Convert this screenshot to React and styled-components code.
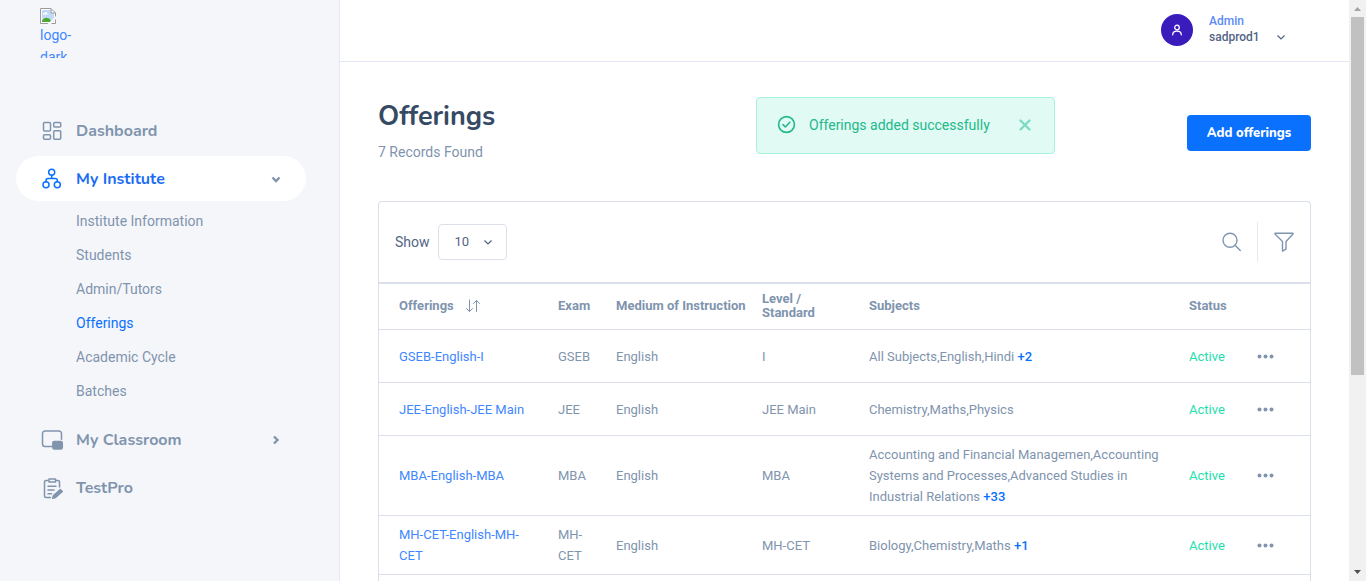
import React from "react";
import styled, { createGlobalStyle, css } from "styled-components";

const color = {
  primary: "#0971fe",
  link: "#3f87ff",
  heading: "#364a63",
  base: "#526484",
  muted: "#8094ae",
  border: "#dbdfea",
  line: "#e5e9f2",
  panel: "#f5f6fa",
  success: "#1ee0ac",
  successDark: "#20b98b",
};

const bodyFont = `Roboto, "Liberation Sans", sans-serif`;
const displayFont = `Nunito, Lato, "Open Sans", sans-serif`;

const GlobalStyle = createGlobalStyle`
  *, *::before, *::after { box-sizing: border-box; }
  body {
    margin: 0;
    background: #fff;
    color: ${color.base};
    font: 400 14px/22px ${bodyFont};
  }
  a { text-decoration: none; }
  button { font: inherit; cursor: pointer; }
`;

const Page = styled.div`
  display: flex;
  height: 100vh;
  overflow: hidden;
`;

/* Sidebar */
const Sidebar = styled.aside`
  flex: 0 0 340px;
  background: ${color.panel};
  border-right: 1px solid ${color.line};
`;

const Brand = styled.a`
  display: block;
  width: 34px;
  height: 50px;
  margin: 8px 0 50px 40px;
  overflow: hidden;
  color: ${color.link};
  svg { display: block; }
`;

const Menu = styled.ul`
  display: flex;
  flex-direction: column;
  gap: 3px;
  margin: 0;
  padding: 0 33px 0 16px;
  list-style: none;
`;

const MenuLink = styled.a`
  display: flex;
  align-items: center;
  gap: 12px;
  height: 45px;
  padding: 0 24px;
  border-radius: 23px;
  color: ${(p) => (p.$active ? "#1a6cf5" : color.muted)};
  background: ${(p) => (p.$active ? "#fff" : "transparent")};
  font: 700 16px/24px ${displayFont};
`;

const MenuIcon = styled.svg`
  flex: none;
  width: 24px;
  height: 24px;
  fill: none;
  stroke: currentColor;
  stroke-width: 1.5;
  stroke-linecap: round;
  stroke-linejoin: round;
  color: ${(p) => (p.$active ? color.primary : color.muted)};
`;

const MenuText = styled.span`
  flex: 1;
`;

const Caret = styled.svg`
  flex: none;
  width: 12px;
  height: 12px;
  fill: none;
  stroke: ${(p) => p.$tone || color.muted};
  stroke-width: ${(p) => p.$weight || 2.4};
`;

const SubMenu = styled.ul`
  margin: 3px 0 6px;
  padding: 0 0 0 60px;
  list-style: none;
`;

const SubLink = styled.a`
  display: block;
  font-size: 14px;
  line-height: 34px;
  color: ${(p) => (p.$active ? color.primary : color.muted)};
`;

/* Main column */
const Main = styled.main`
  display: flex;
  flex: 1;
  flex-direction: column;
  min-width: 0;
`;

const Header = styled.header`
  display: flex;
  flex: none;
  justify-content: flex-end;
  height: 62px;
  padding: 13px 62px 0 0;
  border-bottom: 1px solid #e5e5f5;
`;

const UserButton = styled.button`
  display: flex;
  align-items: center;
  gap: 16px;
  height: 34px;
  padding: 0;
  border: 0;
  background: none;
  color: ${color.base};
  text-align: left;
`;

const Avatar = styled.span`
  display: flex;
  align-items: center;
  justify-content: center;
  width: 32px;
  height: 32px;
  border-radius: 50%;
  background: #3a1cbc;
`;

const UserInfo = styled.span`
  display: grid;
  grid-template-columns: 52px auto;
  column-gap: 14px;
  align-items: center;
  align-self: flex-start;
  font-size: 12px;
  font-weight: 500;
  line-height: 16px;
`;

const Role = styled.span`
  grid-column: 1 / -1;
  color: #5a8bf8;
`;

const Content = styled.div`
  display: flex;
  flex: 1;
  flex-direction: column;
  padding: 35px 38px 0;
  min-height: 0;
`;

const PageHead = styled.div`
  display: grid;
  grid-template-columns: minmax(0, 378fr) auto minmax(0, 256fr);
  align-items: start;
  height: 104px;
`;

const Title = styled.h1`
  margin: 2px 0 0;
  color: ${color.heading};
  font: 700 27px/36px ${displayFont};
`;

const Records = styled.p`
  margin: 6px 0 0;
  color: ${color.muted};
`;

const Toast = styled.div`
  display: flex;
  align-items: center;
  width: 299px;
  height: 57px;
  padding: 0 20px 2px;
  border: 1px solid #a5f3de;
  border-radius: 4px;
  background: #e2faf4;
  color: ${color.successDark};
`;

const ToastText = styled.span`
  flex: 1;
  margin-left: 13px;
`;

const CloseButton = styled.button`
  display: flex;
  padding: 3px;
  border: 0;
  background: none;
  color: #78dbc0;
`;

const AddButton = styled.button`
  justify-self: end;
  width: 124px;
  height: 36px;
  margin-top: 18px;
  padding: 0;
  border: 0;
  border-radius: 4px;
  background: ${color.primary};
  color: #fff;
  font: 800 13px/20px ${displayFont};
`;

/* Card and table */
const Card = styled.section`
  flex: 1;
  min-height: 0;
  overflow: hidden;
  border: 1px solid ${color.border};
  border-bottom: 0;
  border-radius: 4px 4px 0 0;
`;

const Toolbar = styled.div`
  display: flex;
  align-items: center;
  height: 80px;
  padding: 0 16px;
`;

const PageSize = styled.label`
  display: flex;
  align-items: center;
  gap: 8px;
  margin-right: auto;
`;

const SelectBox = styled.span`
  display: grid;
  align-items: center;
  width: 69px;
  height: 36px;
  border: 1px solid ${color.border};
  border-radius: 4px;
  > * { grid-area: 1 / 1; }
  svg { justify-self: end; margin-right: 12px; pointer-events: none; }
`;

const Select = styled.select`
  appearance: none;
  width: 100%;
  height: 100%;
  padding: 0 16px;
  border: 0;
  background: none;
  color: ${color.base};
  font: 400 13px/20px ${bodyFont};
`;

const ToolButton = styled.button`
  display: flex;
  padding: 0;
  border: 0;
  background: none;
  color: ${color.muted};
`;

const Divider = styled.span`
  width: 1px;
  height: 40px;
  margin: 0 16px 0 15px;
  background: ${color.line};
`;

const Table = styled.table`
  width: 100%;
  border-top: 2px solid ${color.border};
  border-collapse: separate;
  border-spacing: 0;
  table-layout: fixed;
  color: ${color.muted};
  font-size: 13px;
  line-height: 21px;
`;

const cell = css`
  padding: 8px;
  border-bottom: 1px solid ${color.border};
  text-align: left;
  vertical-align: middle;
  &:first-child { padding-left: 20px; }
`;

const Th = styled.th`
  ${cell}
  width: ${(p) => p.$width || "auto"};
  height: 46px;
  padding-bottom: 9px;
  font-weight: 700;
  line-height: 14px;
`;

const Td = styled.td`
  ${cell}
`;

const SortButton = styled.button`
  display: flex;
  align-items: center;
  gap: 11px;
  padding: 0;
  border: 0;
  background: none;
  color: inherit;
`;

const NameLink = styled.a`
  color: ${color.link};
`;

const MoreLink = styled.a`
  color: ${color.primary};
  font-weight: 500;
`;

const Status = styled.span`
  color: ${color.success};
`;

const DotsButton = styled.button`
  display: flex;
  align-items: center;
  height: 36px;
  padding: 0;
  border: 0;
  background: none;
  color: ${color.muted};
`;

/* Scroll track */
const Track = styled.div`
  display: flex;
  flex: 0 0 17px;
  flex-direction: column;
  align-items: center;
  background: #f1f1f1;
`;

const TrackArrow = styled.svg`
  flex: none;
  width: 17px;
  height: 17px;
  fill: ${(p) => p.$tone};
`;

const TrackBody = styled.div`
  flex: 1;
  width: 13px;
`;

const Thumb = styled.div`
  height: 65.5%;
  background: #c1c1c1;
`;

const BrokenImage = () => (
  <svg width="16" height="16" viewBox="0 0 16 16" aria-hidden="true">
    <path d="M.5.5H11L15.500 5v10.500H.5z" fill="#fff" stroke="#9a9a9a" />
    <path d="M2 2h9v3h3v9H2z" fill="#c3d9f8" />
    <path d="M3 6.200c0-1.200 1-1.500 1.600-1.200C5 3.800 7 4 7 5.200c1 0 1 1.300 0 1.300H3z" fill="#fff" />
    <path d="M2 14v-1c2-4 6-4 8.500-1l1 2z" fill="#4ca82f" />
    <path d="M7.500 16 16 8v3l-5 5z" fill="#f5f6fa" />
    <path d="M11 .8V5h4.200" fill="none" stroke="#9a9a9a" />
  </svg>
);

const CaretDown = (props) => (
  <Caret viewBox="0 0 12 12" aria-hidden="true" {...props}>
    <path d="M2.500 4.500L6 8l3.500-3.500" />
  </Caret>
);

const icons = {
  dashboard: (
    <>
      <rect x="3.500" y="3.500" width="7" height="8.500" rx="1" />
      <rect x="13.700" y="3.500" width="7" height="4.500" rx="1" />
      <rect x="3.500" y="15.800" width="7" height="4.500" rx="1" />
      <rect x="13.700" y="11.800" width="7" height="8.500" rx="1" />
    </>
  ),
  institute: (
    <>
      <circle cx="11.700" cy="5.300" r="3" />
      <circle cx="6" cy="17.800" r="3" />
      <circle cx="17.300" cy="17.800" r="3" />
      <path d="M11.700 8.300v3.200M6 14.800v-1.300q0-2 2-2h7.300q2 0 2 2v1.300" />
    </>
  ),
  classroom: (
    <>
      <path d="M11.500 18.500H5a2.500 2.500 0 0 1-2.500-2.500V5.500A2.500 2.500 0 0 1 5 3h14a2.500 2.500 0 0 1 2.500 2.500v6" />
      <rect x="12.800" y="13.500" width="9.500" height="7.500" rx="1.600" fill="currentColor" />
    </>
  ),
  test: (
    <>
      <path d="M8 4.500H6a1.500 1.500 0 0 0-1.500 1.500v14A1.500 1.500 0 0 0 6 21.500h4.500M16 4.500h2A1.500 1.500 0 0 1 19.500 6v5" />
      <path d="M9 3h6.500v3H9zM8 10.300h8M8 14h6M8 17.700h3.500" />
      <path d="M20.300 13.500l2 2-6.800 6-2.800.7.800-2.700z" fill="currentColor" />
    </>
  ),
};

const NavIcon = ({ name, active }) => (
  <MenuIcon viewBox="0 0 24 24" $active={active} aria-hidden="true">
    {icons[name]}
  </MenuIcon>
);

const subItems = [
  "Institute Information",
  "Students",
  "Admin/Tutors",
  "Offerings",
  "Academic Cycle",
  "Batches",
];

const rows = [
  { name: "GSEB-English-I", exam: "GSEB", level: "I", subjects: "All Subjects,English,Hindi", more: "+2" },
  { name: "JEE-English-JEE Main", exam: "JEE", level: "JEE Main", subjects: "Chemistry,Maths,Physics" },
  {
    name: "MBA-English-MBA",
    exam: "MBA",
    level: "MBA",
    subjects:
      "Accounting and Financial Managemen,Accounting Systems and Processes,Advanced Studies in Industrial Relations",
    more: "+33",
  },
  { name: "MH-CET-English-MH-CET", exam: "MH-CET", level: "MH-CET", subjects: "Biology,Chemistry,Maths", more: "+1" },
];

export default function App() {
  return (
    <>
      <GlobalStyle />
      <Page>
        <Sidebar>
          <Brand href="#">
            <BrokenImage />
            logo-dark
          </Brand>
          <nav>
            <Menu>
              <li>
                <MenuLink href="#">
                  <NavIcon name="dashboard" />
                  <MenuText>Dashboard</MenuText>
                </MenuLink>
              </li>
              <li>
                <MenuLink href="#" $active>
                  <NavIcon name="institute" active />
                  <MenuText>My Institute</MenuText>
                  <CaretDown />
                </MenuLink>
                <SubMenu>
                  {subItems.map((item) => (
                    <li key={item}>
                      <SubLink href="#" $active={item === "Offerings"}>
                        {item}
                      </SubLink>
                    </li>
                  ))}
                </SubMenu>
              </li>
              <li>
                <MenuLink href="#">
                  <NavIcon name="classroom" />
                  <MenuText>My Classroom</MenuText>
                  <Caret viewBox="0 0 12 12" aria-hidden="true">
                    <path d="M4 2.500L7.500 6 4 9.500" />
                  </Caret>
                </MenuLink>
              </li>
              <li>
                <MenuLink href="#">
                  <NavIcon name="test" />
                  <MenuText>TestPro</MenuText>
                </MenuLink>
              </li>
            </Menu>
          </nav>
        </Sidebar>

        <Main>
          <Header>
            <UserButton type="button">
              <Avatar>
                <svg width="12" height="12" viewBox="0 0 12 12" fill="none" stroke="#fff" strokeWidth="1.300" strokeLinecap="round" aria-hidden="true">
                  <circle cx="6" cy="3.500" r="2.300" />
                  <path d="M1.700 10.800c0-5 8.600-5 8.600 0" />
                </svg>
              </Avatar>
              <UserInfo>
                <Role>Admin</Role>
                <span>sadprod1</span>
                <CaretDown $tone={color.base} $weight={1.2} />
              </UserInfo>
            </UserButton>
          </Header>

          <Content>
            <PageHead>
              <div>
                <Title>Offerings</Title>
                <Records>7 Records Found</Records>
              </div>
              <Toast role="status">
                <svg width="19" height="19" viewBox="0 0 19 19" fill="none" stroke="currentColor" strokeWidth="1.600" strokeLinecap="round" strokeLinejoin="round" aria-hidden="true">
                  <circle cx="9.500" cy="9.500" r="7.900" />
                  <path d="M6 9.700l2.400 2.300 4.400-4.700" />
                </svg>
                <ToastText>Offerings added successfully</ToastText>
                <CloseButton type="button" aria-label="Close">
                  <svg width="12" height="12" viewBox="0 0 12 12" stroke="currentColor" strokeWidth="2.200" strokeLinecap="round" aria-hidden="true">
                    <path d="M1.500 1.500l9 9M10.500 1.500l-9 9" />
                  </svg>
                </CloseButton>
              </Toast>
              <AddButton type="button">Add offerings</AddButton>
            </PageHead>

            <Card>
              <Toolbar>
                <PageSize>
                  Show
                  <SelectBox>
                    <Select defaultValue="10">
                      <option>10</option>
                    </Select>
                    <CaretDown $tone={color.base} $weight={1.2} />
                  </SelectBox>
                </PageSize>
                <ToolButton type="button" aria-label="Search">
                  <svg width="20" height="20" viewBox="0 0 20 20" fill="none" stroke="currentColor" strokeWidth="1.400" strokeLinecap="round" aria-hidden="true">
                    <circle cx="8" cy="8.300" r="7" />
                    <path d="M13 13.300l5.300 5.300" />
                  </svg>
                </ToolButton>
                <Divider />
                <ToolButton type="button" aria-label="Filter">
                  <svg width="20" height="20" viewBox="0 0 20 20" fill="none" stroke="currentColor" strokeWidth="1.400" strokeLinejoin="round" aria-hidden="true">
                    <path d="M1 1.200h18v.8l-7 7.500v7.700l-3.500 2V9.500L1 2z" />
                  </svg>
                </ToolButton>
              </Toolbar>

              <Table>
                <thead>
                  <tr>
                    <Th scope="col" $width="171px">
                      <SortButton type="button">
                        Offerings
                        <svg width="16" height="14" viewBox="0 0 16 14" fill="none" stroke="currentColor" strokeLinecap="round" strokeLinejoin="round" aria-hidden="true">
                          <path d="M4.500 1v11.500M1.500 9.500l3 3 3-3M11.500 12.500v-11M8.500 4.500l3-3 3 3" />
                        </svg>
                      </SortButton>
                    </Th>
                    <Th scope="col" $width="58px">Exam</Th>
                    <Th scope="col" $width="146px">Medium of Instruction</Th>
                    <Th scope="col" $width="107px">Level / Standard</Th>
                    <Th scope="col">Subjects</Th>
                    <Th scope="col" $width="68px">Status</Th>
                    <Th scope="col" $width="61px" aria-label="Actions" />
                  </tr>
                </thead>
                <tbody>
                  {rows.map((row) => (
                    <tr key={row.name}>
                      <Td>
                        <NameLink href="#">{row.name}</NameLink>
                      </Td>
                      <Td>{row.exam}</Td>
                      <Td>English</Td>
                      <Td>{row.level}</Td>
                      <Td>
                        {row.subjects} {row.more && <MoreLink href="#">{row.more}</MoreLink>}
                      </Td>
                      <Td>
                        <Status>Active</Status>
                      </Td>
                      <Td>
                        <DotsButton type="button" aria-label="More actions">
                          <svg width="17" height="5" viewBox="0 0 17 5" fill="currentColor" aria-hidden="true">
                            <circle cx="2.500" cy="2.500" r="2" />
                            <circle cx="8.500" cy="2.500" r="2" />
                            <circle cx="14.500" cy="2.500" r="2" />
                          </svg>
                        </DotsButton>
                      </Td>
                    </tr>
                  ))}
                </tbody>
              </Table>
            </Card>
          </Content>
        </Main>

        <Track aria-hidden="true">
          <TrackArrow viewBox="0 0 17 17" $tone="#a3a3a3">
            <path d="M5 11l3.500-4 3.500 4z" />
          </TrackArrow>
          <TrackBody>
            <Thumb />
          </TrackBody>
          <TrackArrow viewBox="0 0 17 17" $tone="#505050">
            <path d="M5 6l3.500 4L12 6z" />
          </TrackArrow>
        </Track>
      </Page>
    </>
  );
}
